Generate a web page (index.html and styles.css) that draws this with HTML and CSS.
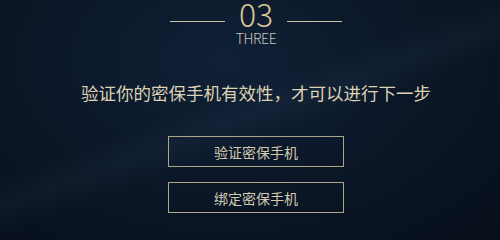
FILE: index.html
```html
<!DOCTYPE html>
<html lang="zh-CN">
<head>
<meta charset="utf-8">
<title>验证密保手机</title>
<link rel="stylesheet" href="styles.css">
</head>
<body>
<main class="page">
  <div class="step">
    <div class="step-head">
      <span class="rule"></span>
      <span class="step-num">03</span>
      <span class="rule"></span>
    </div>
    <div class="step-label">THREE</div>
  </div>
  <p class="notice">验证你的密保手机有效性<span class="punct">，</span>才可以进行下一步</p>
  <div class="actions">
    <button class="btn" type="button">验证密保手机</button>
    <button class="btn" type="button">绑定密保手机</button>
  </div>
</main>
</body>
</html>
```

FILE: styles.css
```css
html {
  min-height: 100%;
  background:
    linear-gradient(160deg, rgba(255,255,255,0) 42%, rgba(120,160,190,0.05) 49%, rgba(255,255,255,0) 56%),
    radial-gradient(ellipse at 45% 25%, #102036 0%, #0b1727 50%, #070f1a 100%);
  background-color: #0a1422;
}
html, body {
  margin: 0;
  padding: 0;
}
body {
  width: 500px;
  height: 223px;
  overflow: hidden;
  font-family: "Noto Sans CJK SC", "Noto Sans", sans-serif;
}
.page {
  display: flex;
  flex-direction: column;
  align-items: center;
  padding-left: 12px;
}
.step {
  display: flex;
  flex-direction: column;
  align-items: center;
}
.step-head {
  display: flex;
  align-items: center;
  gap: 14px;
  height: 32px;
  margin-top: -3px;
}
.rule {
  width: 55px;
  height: 1px;
  background: #c9c2ab;
  margin-top: 16px;
}
.step-num {
  font-family: "Noto Sans CJK SC", sans-serif;
  font-weight: 300;
  font-size: 32px;
  line-height: 32px;
  color: #d8c593;
}
.step-label {
  font-family: "Noto Sans CJK SC", sans-serif;
  font-weight: 300;
  font-size: 14px;
  line-height: 14px;
  letter-spacing: -0.4px;
  margin-top: 2px;
  color: #cac6bc;
}
.notice {
  margin: 37px 0 0;
  font-size: 17.5px;
  line-height: 22px;
  color: #dcd2b4;
}
.punct {
  font-family: "Noto Sans CJK TC", sans-serif;
}
.actions {
  display: flex;
  flex-direction: column;
  gap: 15px;
  margin-top: 32px;
}
.btn {
  width: 176px;
  height: 31px;
  box-sizing: border-box;
  border: 1px solid #aea58c;
  background: transparent;
  color: #d3cab2;
  font-family: "Noto Sans CJK SC", sans-serif;
  font-size: 14px;
  padding: 0;
}
```
